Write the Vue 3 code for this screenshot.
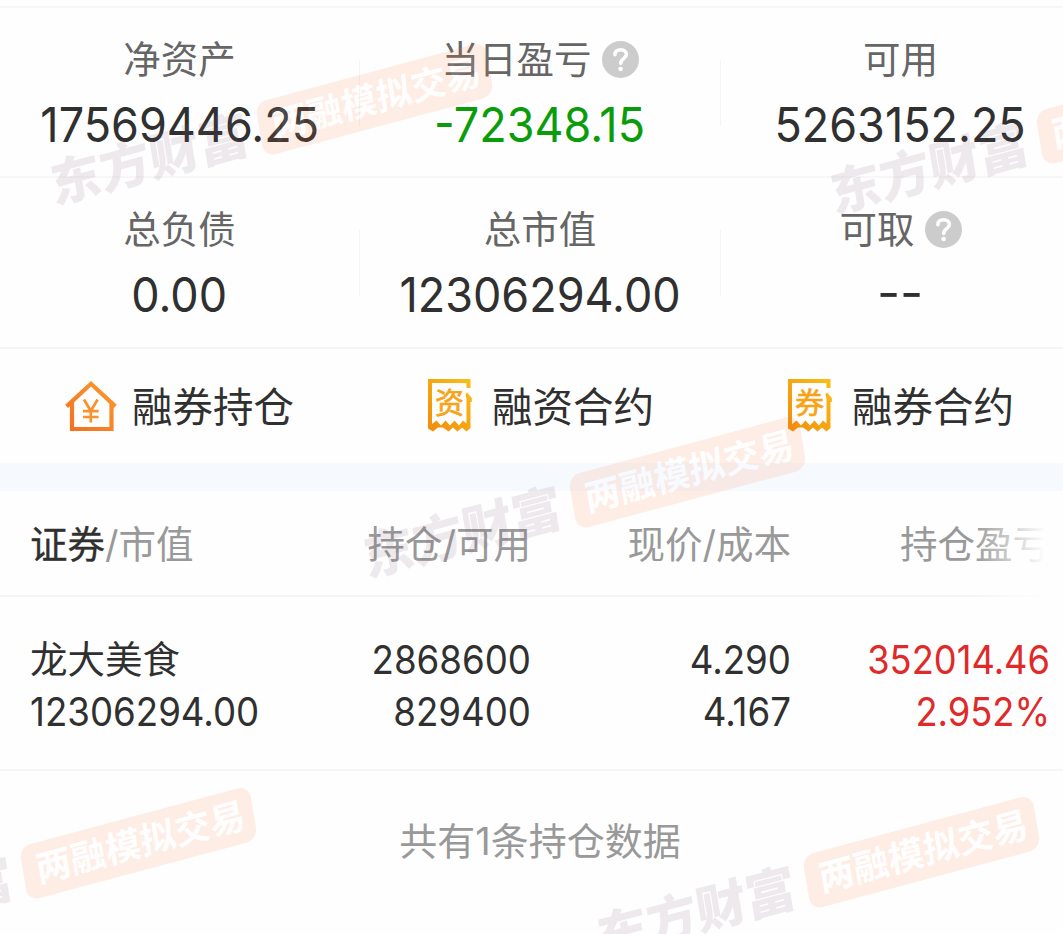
<script setup>
import { ref } from 'vue';

const summary = ref([
  [
    { label: '净资产', value: '17569446.25' },
    { label: '当日盈亏', value: '-72348.15', help: true, down: true },
    { label: '可用', value: '5263152.25' },
  ],
  [
    { label: '总负债', value: '0.00' },
    { label: '总市值', value: '12306294.00' },
    { label: '可取', value: '--', help: true },
  ],
]);

const links = [
  { icon: 'house', mark: '¥', label: '融券持仓' },
  { icon: 'ticket', mark: '资', label: '融资合约' },
  { icon: 'ticket', mark: '券', label: '融券合约' },
];

const positions = ref([
  {
    name: '龙大美食',
    value: '12306294.00',
    amount: '2868600',
    available: '829400',
    price: '4.290',
    cost: '4.167',
    profit: '352014.46',
    rate: '2.952%',
  },
]);

// top left corner of each orange tag
const marks = [
  [255, 103],
  [1035, 112],
  [568, 476],
  [19, 847],
  [802, 856],
];
</script>

<template>
  <div class="page">
    <div class="summary">
      <div v-for="(row, i) in summary" :key="i" class="summary-row">
        <div v-for="item in row" :key="item.label" class="cell">
          <div class="label">
            <span class="label-text">{{ item.label }}</span>
            <svg v-if="item.help" class="help" viewBox="0 0 37 37">
              <circle cx="18.5" cy="18.5" r="18.5" fill="#cccccc" />
              <path d="M12.9 13.8C12.9 10.4 15.3 8.7 18.6 8.7C22 8.7 24.4 10.7 24.4 13.6C24.4 17.6 18.7 17.8 18.7 22.4" fill="none" stroke="#fff" stroke-width="3.6" stroke-linecap="round" />
              <circle cx="18.6" cy="28" r="2.3" fill="#fff" />
            </svg>
          </div>
          <div class="value" :class="{ down: item.down, empty: item.value === '--' }">{{ item.value }}</div>
        </div>
      </div>
    </div>

    <div class="links">
      <div v-for="link in links" :key="link.label" class="link">
        <svg v-if="link.icon === 'house'" class="link-icon" viewBox="0 0 52 52">
          <defs>
            <linearGradient id="house" x1="0" y1="1" x2="1" y2="0">
              <stop offset="0" stop-color="#f37021" />
              <stop offset="1" stop-color="#fb9a2c" />
            </linearGradient>
          </defs>
          <path d="M1.6 26.4L26 3.8L50.4 26.4M7 22V49H46.5V22" fill="none" stroke="url(#house)" stroke-width="4.2" />
          <path d="M19 19.5L25.8 31L32.6 19.5M18 31.2H33.6M18 37H33.6M25.8 31V42.5" fill="none" stroke="#f8922d" stroke-width="2.7" />
        </svg>
        <svg v-else class="link-icon" viewBox="2 1 52 52">
          <defs>
            <linearGradient id="ticket" x1="0" y1="1" x2="1" y2="0">
              <stop offset="0" stop-color="#f08c0c" />
              <stop offset="1" stop-color="#fcbe16" />
            </linearGradient>
          </defs>
          <path d="M5 0H47.5V9H43.5V4H9V45L13.5 41.5L18 46.5L22.5 41.5L27 46.5L31.5 41.5L36 46.5L40 41.5L43.5 44.5V20L42.5 15L44 13.5L48.8 19V23H47.5V49L43.5 52.5L39 48.5L34.5 52.5L30 48.5L25.5 52.5L20 48.5L15 48.5L10 52.5L5 49.5Z" fill="url(#ticket)" />
          <text x="26.5" y="35" text-anchor="middle" class="ticket-text">{{ link.mark }}</text>
        </svg>
        <span class="link-text">{{ link.label }}</span>
      </div>
    </div>

    <div class="band"></div>

    <div class="grid head">
      <div class="first"><span class="active">证券</span>/市值</div>
      <div>持仓/可用</div>
      <div>现价/成本</div>
      <div>持仓盈亏</div>
      <div class="fade"></div>
    </div>

    <div v-for="row in positions" :key="row.name" class="grid position">
      <div class="first">
        <div class="name">{{ row.name }}</div>
        <div class="number">{{ row.value }}</div>
      </div>
      <div>
        <div class="number">{{ row.amount }}</div>
        <div class="number">{{ row.available }}</div>
      </div>
      <div>
        <div class="number">{{ row.price }}</div>
        <div class="number">{{ row.cost }}</div>
      </div>
      <div class="up">
        <div class="number">{{ row.profit }}</div>
        <div class="number">{{ row.rate }}</div>
      </div>
    </div>

    <div class="total">共有{{ positions.length }}条持仓数据</div>

    <svg class="watermark" viewBox="0 0 1063 934">
      <g v-for="([x, y], i) in marks" :key="i" :transform="`matrix(0.966 -0.259 0.165 0.986 ${x} ${y})`">
        <rect x="0" y="0" width="238" height="55" rx="12" fill="#ff7735" />
        <text x="13" y="40" class="tag-text">两融模拟交易</text>
        <text x="-216" y="46" class="brand-text">东方财富</text>
      </g>
    </svg>
  </div>
</template>

<style>
body {
  background: #fefefe;
}
</style>

<style scoped>
.page {
  position: relative;
  width: 1063px;
  height: 934px;
  overflow: hidden;
  background: #fefefe;
  color: #303030;
  font-family: Inter, "Noto Sans CJK SC", sans-serif;
  font-feature-settings: "case";
}

.summary {
  width: 1080px;
  padding-top: 6px;
}

.summary-row {
  display: grid;
  grid-template-columns: 360px 361px 359px;
  box-sizing: border-box;
  height: 170px;
  padding-top: 52px;
  border-top: 2px solid #f7f7f7;
}

.summary-row + .summary-row {
  height: 171px;
}

.cell {
  display: flex;
  flex-direction: column;
  align-items: center;
  height: 66px;
  border-right: 1px solid #f4f4f4;
}

.cell:last-child {
  border-right: none;
}

.label {
  display: flex;
  align-items: center;
  gap: 10px;
  height: 38px;
  margin-top: -20px;
  color: #666;
  font-size: 37.5px;
  line-height: 38px;
  white-space: nowrap;
}

.label-text {
  padding-top: 2px;
}

.help {
  width: 37px;
  height: 37px;
}

.value {
  height: 60px;
  margin-top: 17px;
  font-size: 48px;
  line-height: 60px;
  white-space: nowrap;
  transform: scaleX(0.937);
}

.empty {
  transform: scaleX(1.05);
}

.down {
  color: #0a9c0a;
}

.links {
  display: grid;
  grid-template-columns: repeat(3, 360px);
  box-sizing: border-box;
  width: 1080px;
  height: 116px;
  border-top: 2px solid #f5f5f5;
}

.link {
  display: flex;
  align-items: center;
  gap: 15px;
  padding-left: 65px;
  font-size: 40.5px;
}

.link-icon {
  width: 52px;
  height: 52px;
  overflow: visible;
}

.link-text {
  padding-bottom: 4px;
}

.ticket-text {
  fill: #f8a315;
  stroke: #f8a315;
  stroke-width: 0.7px;
  font-size: 29px;
}

.band {
  height: 28px;
  background: #f6faff;
}

.grid {
  position: relative;
  display: grid;
  grid-template-columns: 231px 270px 260px 259px;
  box-sizing: border-box;
  padding-left: 30px;
  text-align: right;
  white-space: nowrap;
}

.first {
  text-align: left;
}

.head {
  height: 106px;
  padding-top: 2px;
  border-bottom: 2px solid #f5f5f5;
  color: #999;
  font-size: 37.5px;
  line-height: 104px;
}

.active {
  color: #303030;
  -webkit-text-stroke: 0.3px #303030;
}

.fade {
  position: absolute;
  top: 0;
  right: 0;
  width: 90px;
  height: 106px;
  background: linear-gradient(to right, #fefefe00, #fefefe 80%);
}

.position {
  height: 174px;
  padding-top: 37px;
  border-bottom: 2px solid #f5f5f5;
  font-size: 39px;
  line-height: 52px;
}

.number {
  transform: scaleX(0.94);
  transform-origin: right;
}

.first .number {
  transform-origin: left;
}

.name {
  font-size: 37.5px;
}

.up {
  color: #e02a2a;
}

.up .number {
  transform: scaleX(0.93);
}

.total {
  width: 1080px;
  padding-top: 40px;
  color: #999;
  font-size: 38px;
  line-height: 60px;
  text-align: center;
}

.watermark {
  position: absolute;
  top: 0;
  left: 0;
  width: 1063px;
  height: 934px;
  opacity: 0.12;
  pointer-events: none;
}

.tag-text {
  fill: #fff;
  font-size: 36px;
  font-weight: 700;
}

.brand-text {
  fill: #785a78;
  font-size: 51px;
  font-weight: 900;
}
</style>
